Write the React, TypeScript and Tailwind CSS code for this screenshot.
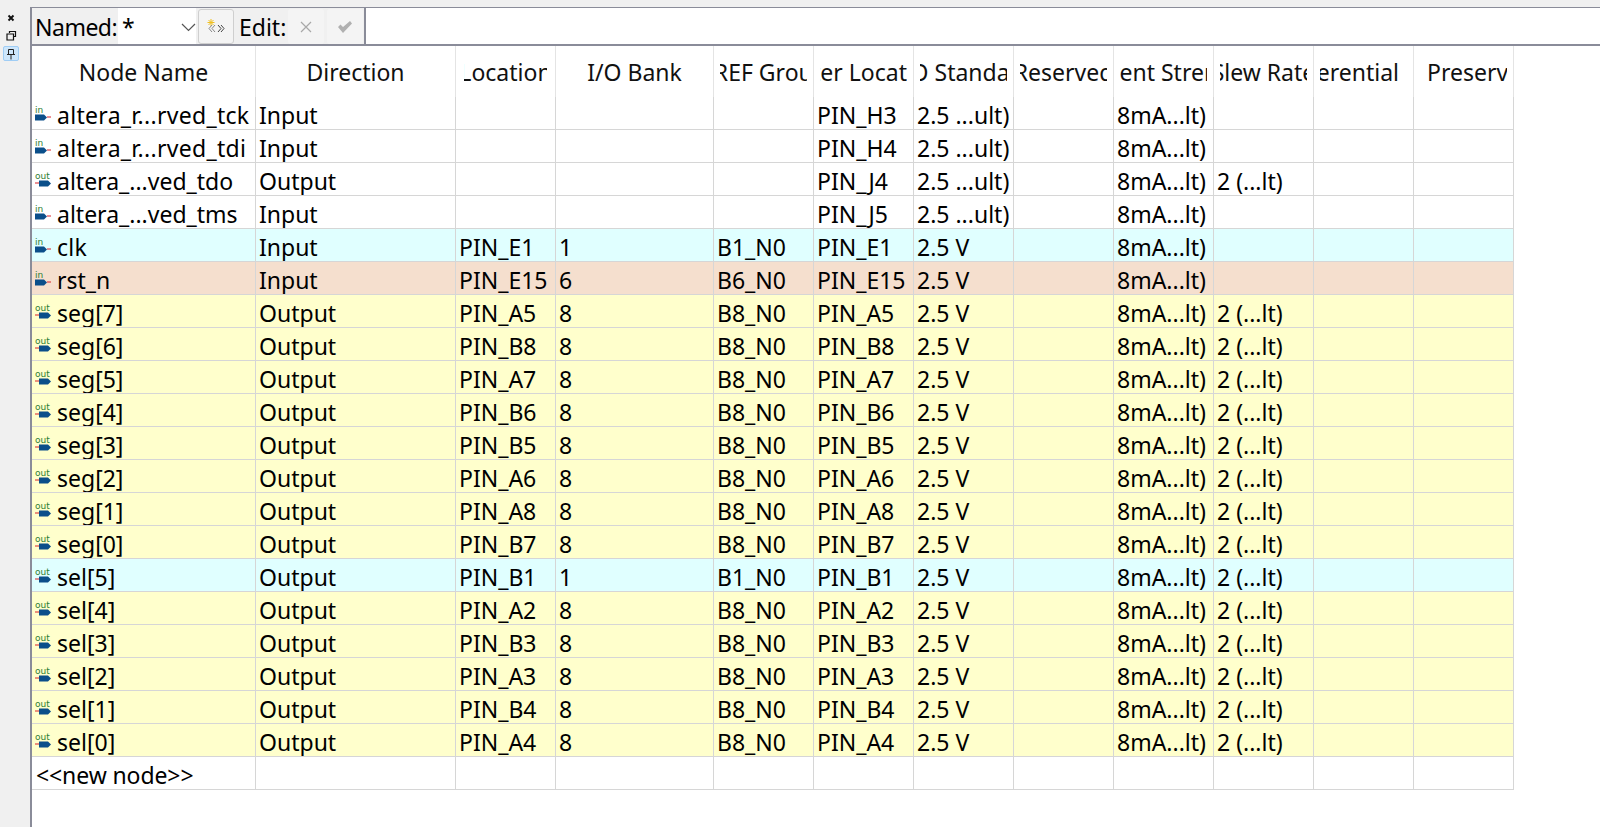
import React from "react";

const GRID =
  "grid grid-cols-[224px_200px_100px_158px_100px_100px_100px_100px_100px_100px_100px_100px] w-[1482px]";

function PinIcon({ dir }: { dir: "in" | "out" }) {
  return (
    <svg width="18" height="18" viewBox="0 0 18 18" className="shrink-0">
      <text x="1" y="7" fill="#2e7d32" style={{ fontSize: 9, fontFamily: "'DejaVu Sans', sans-serif" }}>
        {dir}
      </text>
      {dir === "in" ? (
        <>
          <path d="M1 8.500h9l3 3l-3 3h-9z" fill="#0b4f8a" />
          <path d="M13 11h4" stroke="#d8232a" strokeWidth="1" />
        </>
      ) : (
        <>
          <path d="M5 8.500h9l3 3l-3 3h-9z" fill="#0b4f8a" />
          <path d="M1 11h4" stroke="#d8232a" strokeWidth="1" />
        </>
      )}
    </svg>
  );
}

type Row = {
  name: string;
  dir: "Input" | "Output";
  loc: string;
  bank: string;
  vref: string;
  fitter: string;
  std: string;
  slew: string;
  bg: string;
};

const Y = "bg-[#ffffcc]";
const C = "bg-[#e0ffff]";
const P = "bg-[#f5dfce]";
const W = "bg-white";

const mk = (name: string, dir: Row["dir"], pin: string, bank: string, bg: string): Row => ({
  name,
  dir,
  loc: pin,
  bank,
  vref: `B${bank}_N0`,
  fitter: pin,
  std: "2.5 V",
  slew: dir === "Output" ? "2 (...lt)" : "",
  bg,
});

const rows: Row[] = [
  { name: "altera_r...rved_tck", dir: "Input", loc: "", bank: "", vref: "", fitter: "PIN_H3", std: "2.5 ...ult)", slew: "", bg: W },
  { name: "altera_r...rved_tdi", dir: "Input", loc: "", bank: "", vref: "", fitter: "PIN_H4", std: "2.5 ...ult)", slew: "", bg: W },
  { name: "altera_...ved_tdo", dir: "Output", loc: "", bank: "", vref: "", fitter: "PIN_J4", std: "2.5 ...ult)", slew: "2 (...lt)", bg: W },
  { name: "altera_...ved_tms", dir: "Input", loc: "", bank: "", vref: "", fitter: "PIN_J5", std: "2.5 ...ult)", slew: "", bg: W },
  mk("clk", "Input", "PIN_E1", "1", C),
  mk("rst_n", "Input", "PIN_E15", "6", P),
  mk("seg[7]", "Output", "PIN_A5", "8", Y),
  mk("seg[6]", "Output", "PIN_B8", "8", Y),
  mk("seg[5]", "Output", "PIN_A7", "8", Y),
  mk("seg[4]", "Output", "PIN_B6", "8", Y),
  mk("seg[3]", "Output", "PIN_B5", "8", Y),
  mk("seg[2]", "Output", "PIN_A6", "8", Y),
  mk("seg[1]", "Output", "PIN_A8", "8", Y),
  mk("seg[0]", "Output", "PIN_B7", "8", Y),
  mk("sel[5]", "Output", "PIN_B1", "1", C),
  mk("sel[4]", "Output", "PIN_A2", "8", Y),
  mk("sel[3]", "Output", "PIN_B3", "8", Y),
  mk("sel[2]", "Output", "PIN_A3", "8", Y),
  mk("sel[1]", "Output", "PIN_B4", "8", Y),
  mk("sel[0]", "Output", "PIN_A4", "8", Y),
];

const headers: { t: string; c: string }[] = [
  { t: "Node Name", c: "w-full justify-center" },
  { t: "Direction", c: "w-full justify-center" },
  { t: "Location", c: "justify-center mx-[2px] w-[83px]" },
  { t: "I/O Bank", c: "w-full justify-center" },
  { t: "VREF Group", c: "w-full justify-center" },
  { t: "Fitter Location", c: "w-full justify-center" },
  { t: "I/O Standard", c: "w-full justify-center" },
  { t: "Reserved", c: "w-full justify-center" },
  { t: "Current Strength", c: "w-full justify-center" },
  { t: "Slew Rate", c: "w-full justify-center" },
  { t: "Differential", c: "w-full justify-end pr-[8px]" },
  { t: "Preservation", c: "w-full justify-start pl-[7px]" },
];

function Cell({ children }: { children?: React.ReactNode }) {
  return (
    <div className="h-[33px] border-r border-b border-[#d6d6d6] pl-[3px] pt-[4px] flex items-center overflow-hidden whitespace-nowrap">
      {children}
    </div>
  );
}

export default function App() {
  return (
    <div className="h-[827px] w-[1600px] flex overflow-hidden bg-[#f0f0f0] text-[23px] leading-none text-black font-['Noto_Sans',sans-serif]">
      <aside className="w-[30px] shrink-0 pt-[12px] pl-[5px] flex flex-col items-start gap-[6px]">
        <svg width="12" height="12" viewBox="0 0 12 12">
          <path d="M3.500 3.500l5 5M8.500 3.500l-5 5" stroke="#111" strokeWidth="1.900" />
        </svg>
        <svg width="12" height="12" viewBox="0 0 12 12" fill="none" stroke="#111" strokeWidth="1.200">
          <path d="M4.500 3V1.500h6v5H8.500" />
          <path d="M2 4h6.500v6H2z" />
        </svg>
        <div className="w-[16px] h-[15px] -ml-[2px] -mt-[2px] rounded-[2px] border border-[#9fcdf5] bg-[#cde6fb] flex items-center justify-center">
          <svg width="10" height="12" viewBox="0 0 10 12" fill="none" stroke="#222" strokeWidth="1">
            <path d="M2.500 1.500h5v5h-5zM1 6.500h8M5 6.500v5" />
          </svg>
        </div>
      </aside>
      <main className="flex-1 flex flex-col pt-[7px]">
        <div className="h-[39px] flex border-t border-l-2 border-b-2 border-[#8a8c99]">
          <span className="w-[86px] pl-[3px] pt-[2px] flex items-center tracking-[-0.5px] whitespace-nowrap">Named:</span>
          <div className="w-[78px] bg-white flex items-center justify-between pl-[4px] pt-[2px]">
            <span>*</span>
            <svg width="15" height="10" viewBox="0 0 15 10" fill="none" stroke="#555" strokeWidth="1.200">
              <path d="M1 2l6.500 6.500L14 2" />
            </svg>
          </div>
          <div className="w-[36px] h-[35px] ml-[2px] mt-[1px] bg-[#f4f4f4] rounded-[3px] border border-[#cfcfcf] flex items-center justify-center">
            <svg width="18" height="16" viewBox="0 0 18 16" fill="none" strokeWidth="1">
              <path d="M4 0v7M0.500 3.500h7M1.500 1l5 5M6.500 1l-5 5" stroke="#f0c020" />
              <path d="M5 6l-3 3.500L5 13M8 6l-3 3.500L8 13" stroke="#888" />
              <path d="M11 6l3 3.500l-3 3.500M14 6l3 3.500l-3 3.500" stroke="#444" />
            </svg>
          </div>
          <span className="ml-[5px] w-[49px] pt-[2px] flex items-center">Edit:</span>
          <div className="w-[36px] h-[35px] mt-[1px] bg-[#f4f4f4] rounded-[3px] flex items-center justify-center">
            <svg width="12" height="12" viewBox="0 0 12 12">
              <path d="M1 1l10 10M11 1L1 11" stroke="#a8a8a8" strokeWidth="1.200" />
            </svg>
          </div>
          <div className="w-[36px] h-[35px] ml-[3px] mt-[1px] bg-[#f4f4f4] rounded-[3px] flex items-center justify-center">
            <svg width="16" height="14" viewBox="0 0 16 14">
              <path d="M1 7l2.500-2.500L6 7l7-6l2 2.500L6 13z" fill="#b0b0b0" />
            </svg>
          </div>
          <div className="flex-1 ml-[1px] bg-white border-l-2 border-[#8a8c99]" />
        </div>
        <div className="flex-1 bg-white border-l-2 border-[#8a8c99]">
          <div className={`${GRID} h-[51px]`}>
            {headers.map((h) => (
              <div key={h.t} className="border-r border-[#e4e4e4] px-[6px] pt-[2px] flex items-center text-[#111]">
                <div className={`flex items-center overflow-hidden whitespace-nowrap h-[30px] ${h.c}`}>
                  <span className="shrink-0">{h.t}</span>
                </div>
              </div>
            ))}
          </div>
          {rows.map((r) => (
            <div key={r.name} className={`${GRID} ${r.bg}`}>
              <Cell>
                <span className="flex mr-[5px] -ml-[1px]">
                  <PinIcon dir={r.dir === "Input" ? "in" : "out"} />
                </span>
                <span className={r.name.startsWith("altera_r") || r.name === "clk" ? "tracking-[0.3px]" : ""}>{r.name}</span>
              </Cell>
              <Cell>{r.dir}</Cell>
              <Cell>{r.loc}</Cell>
              <Cell>{r.bank}</Cell>
              <Cell>{r.vref}</Cell>
              <Cell>{r.fitter}</Cell>
              <Cell>{r.std}</Cell>
              <Cell />
              <Cell>8mA...lt)</Cell>
              <Cell>{r.slew}</Cell>
              <Cell />
              <Cell />
            </div>
          ))}
          <div className={`${GRID} bg-white`}>
            <Cell>
              <span className="pl-[1px] tracking-[-0.1px]">{"<<new node>>"}</span>
            </Cell>
            {Array.from({ length: 11 }).map((_, i) => (
              <Cell key={i} />
            ))}
          </div>
        </div>
      </main>
    </div>
  );
}
